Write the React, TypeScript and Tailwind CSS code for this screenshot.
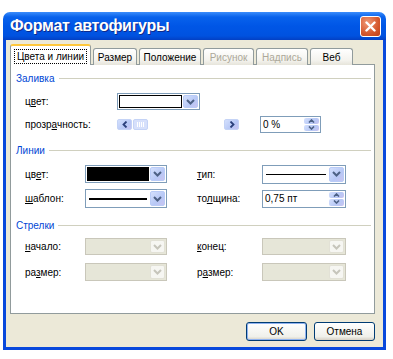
import clsx from "clsx";

const Chevron = ({ color = "#4d6185" }: { color?: string }) => (
  <svg width="9" height="6" viewBox="0 0 9 6">
    <path d="M1 1l3.5 3.5L8 1" fill="none" stroke={color} strokeWidth="2" />
  </svg>
);

function ComboButton({ disabled }: { disabled?: boolean }) {
  return (
    <div
      className={clsx(
        "flex w-[15px] shrink-0 items-center justify-center rounded-[2px] border",
        disabled
          ? "border-[#e2e1d6] bg-[#f6f6f2]"
          : "border-[#b9cbf7] bg-[linear-gradient(135deg,#d4e0fd,#b7c8f6_60%,#c9c4f1)]"
      )}
    >
      <Chevron color={disabled ? "#c6c5bb" : "#4d6185"} />
    </div>
  );
}

function Combo({
  className,
  disabled,
  children,
}: {
  className: string;
  disabled?: boolean;
  children?: React.ReactNode;
}) {
  return (
    <div
      className={clsx(
        "flex gap-px border p-px",
        disabled ? "border-[#c9c7ba] bg-[#e6e6d8]" : "border-[#7f9db9] bg-white",
        className
      )}
    >
      <div className="flex flex-1 items-center">{children}</div>
      <ComboButton disabled={disabled} />
    </div>
  );
}

function Spin({ className, value }: { className: string; value: string }) {
  return (
    <div className={clsx("flex border border-[#7f9db9] bg-white p-px", className)}>
      <div className="flex flex-1 items-center pl-[1px]">{value}</div>
      <div className="flex w-[15px] flex-col gap-px">
        <div className="flex flex-1 items-center justify-center rounded-[2px] bg-[linear-gradient(135deg,#d4e0fd,#b7c8f6_60%,#c9c4f1)]">
          <svg width="7" height="4" viewBox="0 0 7 4">
            <path d="M1 3.5l2.5-2.5L6 3.5" fill="none" stroke="#4d6185" strokeWidth="1.6" />
          </svg>
        </div>
        <div className="flex flex-1 items-center justify-center rounded-[2px] bg-[linear-gradient(135deg,#d4e0fd,#b7c8f6_60%,#c9c4f1)]">
          <svg width="7" height="4" viewBox="0 0 7 4">
            <path d="M1 0.5l2.5 2.5L6 0.5" fill="none" stroke="#4d6185" strokeWidth="1.6" />
          </svg>
        </div>
      </div>
    </div>
  );
}

function Header({ label, className }: { label: string; className: string }) {
  return (
    <div className={clsx("flex h-[14px] items-center gap-[4px] pl-[5px] pr-[3px]", className)}>
      <span className="text-[#0046d5]">{label}</span>
      <div className="h-px flex-1 bg-[#d0d0bf]" />
    </div>
  );
}

function SliderBtn({ dir }: { dir: "l" | "r" }) {
  return (
    <div className="flex h-[11px] w-[15px] items-center justify-center rounded-[2px] border border-[#c4d3f6] bg-[linear-gradient(135deg,#d4e0fd,#b7c8f6_60%,#c9c4f1)]">
      <svg width="6" height="7" viewBox="0 0 6 7">
        <path
          d={dir === "l" ? "M4.5 0.5L1.5 3.5l3 3" : "M1.5 0.5l3 3-3 3"}
          fill="none"
          stroke="#2a3f7a"
          strokeWidth="1.8"
        />
      </svg>
    </div>
  );
}

function Label({ text, u }: { text: string; u: number }) {
  return (
    <span>
      {text.slice(0, u)}
      <span className="underline">{text[u]}</span>
      {text.slice(u + 1)}
    </span>
  );
}

const tabs = [
  { name: "Размер", w: "w-[44px]", off: false },
  { name: "Положение", w: "w-[62px]", off: false },
  { name: "Рисунок", w: "w-[51px]", off: true },
  { name: "Надпись", w: "w-[52px]", off: true },
  { name: "Веб", w: "w-[43px]", off: false },
];

export default function App() {
  return (
    <div className="h-[359px] w-[393px] bg-white pl-[3px] pt-[12px] font-['Liberation_Sans',Arial,sans-serif] text-[10px] text-black">
      <div className="flex h-[338px] w-[383px] flex-col">
        {/* title bar */}
        <div className="flex h-[28px] items-center justify-between rounded-t-[7px] bg-[linear-gradient(#3b8dfb,#0862ec_18%,#0056e6_50%,#0052e0_85%,#0340c4)] pl-[7px] pr-[5px]">
          <span className="text-[16px] font-bold tracking-[-0.3px] text-white [text-shadow:1px_1px_#0f2a8a]">
            Формат автофигуры
          </span>
          <div className="flex h-[21px] w-[21px] items-center justify-center rounded-[3px] border border-white bg-[radial-gradient(circle_at_35%_30%,#f09a78,#d5582e_60%,#bd3f17)]">
            <svg width="11" height="11" viewBox="0 0 11 11">
              <path d="M1.5 1.5l8 8M9.5 1.5l-8 8" stroke="white" strokeWidth="2.4" strokeLinecap="round" />
            </svg>
          </div>
        </div>

        {/* body */}
        <div className="flex flex-1 flex-col border-x-[3px] border-b-[3px] border-[#0848dc] bg-[#ece9d8]">
          {/* tabs */}
          <div className="relative z-10 -mb-px ml-[4px] mt-[4px] flex h-[21px] items-end whitespace-nowrap">
            <div className="flex h-[21px] w-[81px] items-start justify-center rounded-t-[3px] border-x border-t-[2px] border-x-[#919b9c] border-t-[#ffc83c] bg-white pt-[3px]">
              <span className="border border-dotted border-black px-[2px] leading-[13px]">Цвета и линии</span>
            </div>
            {tabs.map((t) => (
              <div
                key={t.name}
                className={clsx(
                  "ml-[2px] flex h-[17px] items-center justify-center rounded-t-[3px] border-x border-t border-[#919b9c] bg-[linear-gradient(#ffffff,#f4f3ee_70%,#e6e4da)]",
                  t.w,
                  t.off ? "text-[#aca899]" : "text-black"
                )}
              >
                {t.name}
              </div>
            ))}
          </div>

          {/* panel */}
          <div className="ml-[4px] flex h-[250px] w-[365px] flex-col border border-[#919b9c] bg-white">
            <Header label="Заливка" className="mt-[6px]" />

            <div className="mt-[8px] flex h-[17px] items-center pl-[14px]">
              <div className="w-[92px]">
                <Label text="цвет:" u={1} />
              </div>
              <Combo className="h-[17px] w-[83px]">
                <div className="h-full w-full border border-black bg-white" />
              </Combo>
            </div>

            <div className="mt-[6px] flex h-[17px] items-center pl-[14px]">
              <div className="w-[92px]">
                <Label text="прозрачность:" u={5} />
              </div>
              <div className="flex w-[122px] items-center">
                <SliderBtn dir="l" />
                <div className="ml-px flex h-[11px] w-[15px] items-center justify-center gap-[1px] rounded-[2px] border border-[#c4d3f6] bg-[#d6e0fb]">
                  <div className="h-[5px] w-px bg-white" />
                  <div className="h-[5px] w-px bg-white" />
                  <div className="h-[5px] w-px bg-white" />
                  <div className="h-[5px] w-px bg-white" />
                </div>
                <div className="flex-1" />
                <SliderBtn dir="r" />
              </div>
              <Spin className="ml-[21px] h-[17px] w-[61px]" value="0 %" />
            </div>

            <Header label="Линии" className="mt-[10px]" />

            <div className="mt-[8px] flex h-[18px] items-center pl-[14px]">
              <div className="w-[60px]">
                <Label text="цвет:" u={2} />
              </div>
              <Combo className="h-[18px] w-[82px]">
                <div className="h-full w-full bg-black" />
              </Combo>
              <div className="ml-[30px] w-[65px]">
                <Label text="тип:" u={0} />
              </div>
              <Combo className="h-[19px] w-[84px]">
                <div className="mx-[2px] h-px w-full bg-black" />
              </Combo>
            </div>

            <div className="mt-[6px] flex h-[19px] items-center pl-[14px]">
              <div className="w-[60px]">
                <Label text="шаблон:" u={0} />
              </div>
              <Combo className="h-[19px] w-[82px]">
                <div className="mx-[2px] h-[2px] w-full bg-black" />
              </Combo>
              <div className="ml-[30px] w-[65px]">
                <Label text="толщина:" u={2} />
              </div>
              <Spin className="h-[18px] w-[84px]" value="0,75 пт" />
            </div>

            <Header label="Стрелки" className="mt-[10px]" />

            <div className="mt-[6px] flex h-[17px] items-center pl-[14px]">
              <div className="w-[60px]">
                <Label text="начало:" u={0} />
              </div>
              <Combo disabled className="h-[17px] w-[82px]" />
              <div className="ml-[30px] w-[65px]">
                <Label text="конец:" u={0} />
              </div>
              <Combo disabled className="h-[17px] w-[84px]" />
            </div>

            <div className="mt-[8px] flex h-[18px] items-center pl-[14px]">
              <div className="w-[60px]">
                <Label text="размер:" u={2} />
              </div>
              <Combo disabled className="h-[18px] w-[82px]" />
              <div className="ml-[30px] w-[65px]">
                <Label text="размер:" u={1} />
              </div>
              <Combo disabled className="h-[18px] w-[84px]" />
            </div>
          </div>

          {/* buttons */}
          <div className="mt-[8px] flex w-[369px] justify-end gap-[7px]">
            <button className="h-[19px] w-[61px] rounded-[3px] border border-[#003c74] bg-[linear-gradient(#ffffff,#f0f0ea_80%,#d6d0c5)] shadow-[inset_0_0_0_1px_#8fb2f0]">
              OK
            </button>
            <button className="h-[19px] w-[61px] rounded-[3px] border border-[#003c74] bg-[linear-gradient(#ffffff,#f0f0ea_80%,#d6d0c5)]">
              Отмена
            </button>
          </div>
        </div>
      </div>
    </div>
  );
}
